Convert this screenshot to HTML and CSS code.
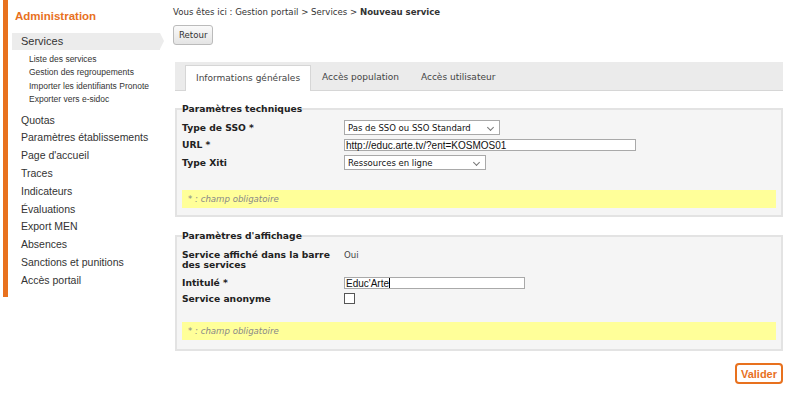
FILE: index.html
```html
<!DOCTYPE html>
<html lang="fr">
<head>
  <meta charset="UTF-8" />
  <title>Nouveau service</title>
  <link rel="stylesheet" href="styles.css">
</head>
<body>
  <div class="page">

    <!-- Left menu -->
    <aside class="sidebar">
      <h2 class="sidebar-title">Administration</h2>
      <ul class="menu">
        <li class="menu-item active">
          <span class="menu-current">Services</span>
          <ul class="submenu">
            <li>Liste des services</li>
            <li>Gestion des regroupements</li>
            <li>Importer les identifiants Pronote</li>
            <li>Exporter vers e-sidoc</li>
          </ul>
        </li>
        <li class="menu-item">Quotas</li>
        <li class="menu-item">Paramètres établissements</li>
        <li class="menu-item">Page d'accueil</li>
        <li class="menu-item">Traces</li>
        <li class="menu-item">Indicateurs</li>
        <li class="menu-item">Évaluations</li>
        <li class="menu-item">Export MEN</li>
        <li class="menu-item">Absences</li>
        <li class="menu-item">Sanctions et punitions</li>
        <li class="menu-item">Accès portail</li>
      </ul>
    </aside>

    <!-- Main content -->
    <main class="main">
      <p class="breadcrumb">Vous êtes ici : Gestion portail &gt; Services &gt; <strong>Nouveau service</strong></p>

      <button class="btn">Retour</button>

      <!-- Tabs -->
      <div class="tabs">
        <span class="tab active">Informations générales</span>
        <span class="tab">Accès population</span>
        <span class="tab">Accès utilisateur</span>
      </div>

      <fieldset class="box">
        <legend>Paramètres techniques</legend>
        <div class="form-row">
          <label>Type de SSO *</label>
          <span class="select select-sso">Pas de SSO ou SSO Standard</span>
        </div>
        <div class="form-row">
          <label>URL *</label>
          <span class="input input-url">http://educ.arte.tv/?ent=KOSMOS01</span>
        </div>
        <div class="form-row">
          <label>Type Xiti</label>
          <span class="select select-xiti">Ressources en ligne</span>
        </div>
        <p class="note">* : champ obligatoire</p>
      </fieldset>

      <fieldset class="box box-display">
        <legend>Paramètres d'affichage</legend>
        <div class="form-row row-top">
          <label>Service affiché dans la barre des services</label>
          <span class="value">Oui</span>
        </div>
        <div class="form-row row-title">
          <label>Intitulé *</label>
          <span class="input input-title">Educ'Arte<i class="caret"></i></span>
        </div>
        <div class="form-row">
          <label>Service anonyme</label>
          <span class="checkbox"></span>
        </div>
        <p class="note">* : champ obligatoire</p>
      </fieldset>

      <div class="actions">
        <button class="btn-primary">Valider</button>
      </div>
    </main>
  </div>
</body>
</html>
```

FILE: styles.css
```css
/* Basic reset */
* {
  margin: 0;
  padding: 0;
  box-sizing: border-box;
}

body {
  font-family: 'DejaVu Sans', Verdana, sans-serif;
  font-size: 8.6px;
  color: #333;
  background: #fff;
}

.page {
  display: flex;
  align-items: flex-start;
}

/* Sidebar */
.sidebar {
  width: 165px;
  margin-left: 3px;
  min-height: 297px;
  border-left: 5px solid #e8711e;
  font-family: 'Liberation Sans', Arial, sans-serif;
  color: #333;
}

.sidebar-title {
  font-size: 11.5px;
  font-weight: bold;
  color: #e8711e;
  padding: 10px 0 0 7px;
  height: 33px;
}

.menu {
  list-style: none;
}

.menu-item {
  font-size: 10.5px;
  line-height: 17.8px;
  padding-left: 13px;
}

.menu-item.active {
  padding-left: 0;
  margin-bottom: 5px;
}

.menu-current {
  display: block;
  position: relative;
  margin-left: 4px;
  width: 148px;
  height: 17px;
  line-height: 17px;
  padding-left: 9px;
  background: #ececec;
  font-size: 11px;
}

/* little arrow at the end of current item */
.menu-current::after {
  content: '';
  position: absolute;
  right: -4px;
  top: 0;
  border-top: 8.5px solid transparent;
  border-bottom: 8.5px solid transparent;
  border-left: 4px solid #ececec;
}

.submenu {
  list-style: none;
  padding: 3px 0 0 21px;
}

.submenu li {
  font-size: 8.5px;
  line-height: 13.4px;
}

/* Main */
.main {
  width: 610px;
  margin-left: 5px;
  padding-top: 7px;
}

.breadcrumb {
  line-height: 10px;
  margin-bottom: 8px;
}

.btn {
  font-family: inherit;
  font-size: 8.6px;
  color: #333;
  height: 20px;
  padding: 0 5px;
  border: 1px solid #bbb;
  border-radius: 3px;
  background: linear-gradient(#fafafa, #e4e4e4);
}

/* Tabs */
.tabs {
  display: flex;
  height: 29px;
  margin: 17px 0 12px 2px;
  padding: 3px 0 0 10px;
  background: #ebebeb;
  border-bottom: 1px solid #d6d6d6;
}

.tab {
  padding: 0 11px;
  line-height: 25px;
  color: #444;
  font-size: 9px;
}

.tab.active {
  background: #fff;
  border: 1px solid #d6d6d6;
  border-bottom: none;
  padding: 0 10px;
  height: 26px;
  margin-bottom: -1px;
}

/* Fieldsets */
.box {
  margin-left: 2px;
  border: 2px solid #e3e3e3;
  background: #f5f5f5;
  padding: 0 5px 7px 5px;
}

.box legend {
  font-size: 9.2px;
  font-weight: bold;
  color: #222;
  line-height: 11px;
}

.box-display {
  margin-top: 13px;
  padding-bottom: 9px;
}

.form-row {
  display: grid;
  grid-template-columns: 162px 1fr;
  align-items: center;
  margin-top: 4px;
}

.form-row:first-of-type {
  margin-top: 6px;
}

.form-row label {
  font-weight: bold;
  font-size: 9.2px;
  color: #222;
  line-height: 10px;
  padding-right: 8px;
}

.form-row.row-top {
  align-items: start;
  margin-top: 9px;
}

.row-title {
  margin-top: 7px;
}

.select,
.input {
  display: flex;
  align-items: center;
  height: 15px;
  padding-left: 3px;
  background: #fff;
  border: 1px solid #a9a9a9;
  color: #111;
  white-space: nowrap;
}

.select {
  position: relative;
  font-size: 8.5px;
}

.select::after {
  content: '';
  position: absolute;
  right: 6px;
  top: 4px;
  width: 4px;
  height: 4px;
  border-right: 1px solid #777;
  border-bottom: 1px solid #777;
  transform: rotate(45deg);
}

.select-sso {
  width: 156px;
}

.select-xiti {
  width: 142px;
}

.input {
  height: 12px;
  padding-left: 1px;
  font-family: 'Liberation Sans', Arial, sans-serif;
  font-size: 10px;
}

.input-url {
  width: 292px;
}

.input-title {
  width: 181px;
}

.caret {
  display: inline-block;
  width: 1px;
  height: 10px;
  background: #000;
}

.value {
  color: #444;
  line-height: 10px;
}

.checkbox {
  display: block;
  width: 11px;
  height: 11px;
  border: 1px solid #555;
  background: #fff;
}

.note {
  margin-top: 20px;
  background: #ffff99;
  color: #888;
  font-style: italic;
  line-height: 18px;
  padding-left: 6px;
}

.box-display .note {
  margin-top: 18px;
}

.actions {
  display: flex;
  justify-content: flex-end;
  margin-top: 12px;
}

.btn-primary {
  font-family: 'Liberation Sans', Arial, sans-serif;
  font-size: 11px;
  font-weight: bold;
  color: #e8711e;
  background: #fff;
  border: 2px solid #e8711e;
  border-radius: 4px;
  height: 21px;
  padding: 0 4px;
}
```
